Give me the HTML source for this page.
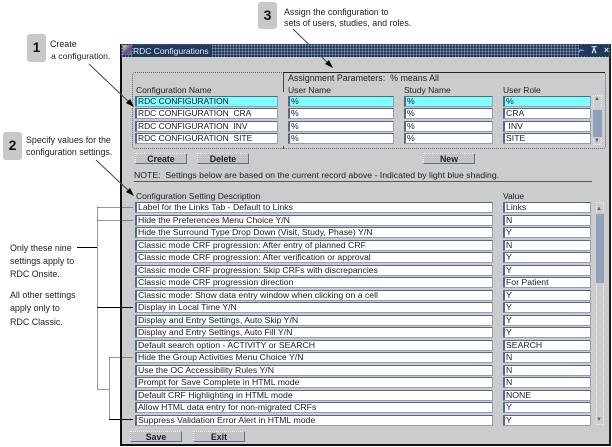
<!DOCTYPE html>
<html><head><meta charset="utf-8"><style>
html,body{margin:0;padding:0;background:#fff}
#p{position:relative;width:612px;height:447px;overflow:hidden;background:#fff;font-family:"Liberation Sans",sans-serif;font-size:8.9px;color:#222;filter:blur(.3px)}
#p div{position:absolute;box-sizing:border-box}
.t{white-space:nowrap;line-height:12px;margin-top:1px}
.f{background:#fff;border:1px solid #8f9fbd;border-left:2px solid #56678c;border-top:1px solid #56678c;height:11px;line-height:9px;padding-left:1px;white-space:nowrap;overflow:hidden;font-size:8.7px;color:#222;border-radius:1px}
.k{font-size:8.45px}
.h{font-size:8.5px}
.c{background:#7fffff}
.b{background:#c4c4c4;border-right:1px solid #5d6f95;border-bottom:1px solid #5d6f95;border-top:1px dotted #fff;border-left:1px dotted #fff;text-align:center;font-weight:bold;font-size:8.8px;line-height:10px;height:11px;width:52px;color:#222}
.n{background:#c8c8c8;border-radius:3px;width:19px;height:28px;text-align:center;font-weight:bold;font-size:14px;line-height:27px;color:#111}
</style></head><body><div id="p">

<div class="n" style="left:27px;top:34px">1</div>
<div class="t" style="left:50px;top:37px">Create</div>
<div class="t" style="left:51px;top:49px;font-size:8.7px">a configuration.</div>
<div class="n" style="left:3px;top:132px">2</div>
<div class="t" style="left:26px;top:133px">Specify values for the</div>
<div class="t" style="left:26px;top:145px">configuration settings.</div>
<div class="n" style="left:258px;top:2px;height:27px">3</div>
<div class="t" style="left:284px;top:5px">Assign the configuration to</div>
<div class="t" style="left:284px;top:16px">sets of users, studies, and roles.</div>
<div class="t" style="left:10px;top:241px">Only these nine</div>
<div class="t" style="left:10px;top:254px">settings apply to</div>
<div class="t" style="left:10px;top:267px">RDC Onsite.</div>
<div class="t" style="left:10px;top:288px">All other settings</div>
<div class="t" style="left:10px;top:301px">apply only to</div>
<div class="t" style="left:10px;top:315px">RDC Classic.</div>

<div style="left:120px;top:44px;width:491px;height:402px;background:#cccccc;border:1px solid #111;border-left:2px solid #111;border-bottom:2px solid #111;border-right:2px solid #222"></div>
<div style="left:121px;top:44px;width:489px;height:13px;background:#1e3a5f;background-image:radial-gradient(#8d9db3 0.8px,transparent 0.9px);background-size:3px 3px"></div>
<div style="left:123px;top:45px;width:9px;height:10px;background:linear-gradient(135deg,#e8e060,#7040a0 55%,#40a060);border-radius:2px"></div>
<div class="t" style="left:133px;top:44px;background:#1e3a5f;color:#e8ecf0;padding:0 3px 0 0;line-height:12px;font-size:8.5px">RDC Configurations</div>
<div class="t" style="left:579px;top:44px;width:30px;background:#1e3a5f;color:#dde;font-size:9px;line-height:11px;letter-spacing:2px;font-weight:bold">⌐ ⊼ ×</div>

<div style="left:132px;top:72px;width:474px;height:77px;border:1px dotted #56678c;border-radius:3px"></div>
<div style="left:283px;top:72px;width:322px;height:1px;background:#223"></div>
<div style="left:283px;top:73px;width:1px;height:19px;background:#445"></div>
<div style="left:283px;top:146px;width:1px;height:3px;background:#445"></div>

<div class="t" style="left:288px;top:71px">Assignment Parameters:&nbsp; % means All</div>
<div class="t h" style="left:136px;top:83px">Configuration Name</div>
<div class="t h" style="left:288px;top:83px">User Name</div>
<div class="t h" style="left:404px;top:83px">Study Name</div>
<div class="t h" style="left:503px;top:83px">User Role</div>

<div class="f c k" style="left:135px;top:96px;width:143px">RDC CONFIGURATION</div>
<div class="f c" style="left:288px;top:96px;width:106px">%</div>
<div class="f c" style="left:404px;top:96px;width:89px">%</div>
<div class="f c" style="left:503px;top:96px;width:88px">%</div>
<div class="f k" style="left:135px;top:108px;width:143px">RDC CONFIGURATION&nbsp; CRA</div>
<div class="f" style="left:288px;top:108px;width:106px">%</div>
<div class="f" style="left:404px;top:108px;width:89px">%</div>
<div class="f" style="left:503px;top:108px;width:88px">CRA</div>
<div class="f k" style="left:135px;top:121px;width:143px">RDC CONFIGURATION&nbsp; INV</div>
<div class="f" style="left:288px;top:121px;width:106px">%</div>
<div class="f" style="left:404px;top:121px;width:89px">%</div>
<div class="f" style="left:503px;top:121px;width:88px">&nbsp;INV</div>
<div class="f k" style="left:135px;top:133px;width:143px">RDC CONFIGURATION&nbsp; SITE</div>
<div class="f" style="left:288px;top:133px;width:106px">%</div>
<div class="f" style="left:404px;top:133px;width:89px">%</div>
<div class="f" style="left:503px;top:133px;width:88px">SITE</div>

<div style="left:593px;top:95px;width:9px;height:50px;border:1px dotted #eee"></div>
<div style="left:593px;top:110px;width:9px;height:27px;background:#8fa0ba"></div>
<div class="t" style="left:594px;top:94px;font-size:6px;line-height:8px;color:#56678c">▲</div>
<div class="t" style="left:594px;top:136px;font-size:6px;line-height:8px;color:#56678c">▼</div>

<div class="b" style="left:135px;top:153px">Create</div>
<div class="b" style="left:197px;top:153px">Delete</div>
<div class="b" style="left:423px;top:153px">New</div>
<div class="t" style="left:134px;top:168px;font-size:8.7px">NOTE:&nbsp; Settings below are based on the current record above - Indicated by light blue shading.</div>
<div style="left:134px;top:181px;width:458px;height:1px;background:#556"></div>
<div class="t h" style="left:136px;top:189px">Configuration Setting Description</div>
<div class="t h" style="left:503px;top:189px">Value</div>

<div class="f" style="left:135px;top:202px;width:358px">Label for the Links Tab - Default to Links</div><div class="f" style="left:503px;top:202px;width:88px">Links</div>
<div class="f" style="left:135px;top:215px;width:358px">Hide the Preferences Menu Choice Y/N</div><div class="f" style="left:503px;top:215px;width:88px">N</div>
<div class="f" style="left:135px;top:227px;width:358px">Hide the Surround Type Drop Down (Visit, Study, Phase) Y/N</div><div class="f" style="left:503px;top:227px;width:88px">Y</div>
<div class="f" style="left:135px;top:240px;width:358px">Classic mode CRF progression: After entry of planned CRF</div><div class="f" style="left:503px;top:240px;width:88px">N</div>
<div class="f" style="left:135px;top:252px;width:358px">Classic mode CRF progression: After verification or approval</div><div class="f" style="left:503px;top:252px;width:88px">Y</div>
<div class="f" style="left:135px;top:265px;width:358px">Classic mode CRF progression: Skip CRFs with discrepancies</div><div class="f" style="left:503px;top:265px;width:88px">Y</div>
<div class="f" style="left:135px;top:277px;width:358px">Classic mode CRF progression direction</div><div class="f" style="left:503px;top:277px;width:88px">For Patient</div>
<div class="f" style="left:135px;top:290px;width:358px">Classic mode: Show data entry window when clicking on a cell</div><div class="f" style="left:503px;top:290px;width:88px">Y</div>
<div class="f" style="left:135px;top:302px;width:358px">Display in Local Time Y/N</div><div class="f" style="left:503px;top:302px;width:88px">Y</div>
<div class="f" style="left:135px;top:315px;width:358px">Display and Entry Settings, Auto Skip Y/N</div><div class="f" style="left:503px;top:315px;width:88px">Y</div>
<div class="f" style="left:135px;top:327px;width:358px">Display and Entry Settings, Auto Fill Y/N</div><div class="f" style="left:503px;top:327px;width:88px">Y</div>
<div class="f" style="left:135px;top:340px;width:358px">Default search option - ACTIVITY or SEARCH</div><div class="f" style="left:503px;top:340px;width:88px">SEARCH</div>
<div class="f" style="left:135px;top:352px;width:358px">Hide the Group Activities Menu Choice Y/N</div><div class="f" style="left:503px;top:352px;width:88px">N</div>
<div class="f" style="left:135px;top:365px;width:358px">Use the OC Accessibility Rules Y/N</div><div class="f" style="left:503px;top:365px;width:88px">N</div>
<div class="f" style="left:135px;top:377px;width:358px">Prompt for Save Complete in HTML mode</div><div class="f" style="left:503px;top:377px;width:88px">N</div>
<div class="f" style="left:135px;top:390px;width:358px">Default CRF Highlighting in HTML mode</div><div class="f" style="left:503px;top:390px;width:88px">NONE</div>
<div class="f" style="left:135px;top:402px;width:358px">Allow HTML data entry for non-migrated CRFs</div><div class="f" style="left:503px;top:402px;width:88px">Y</div>
<div class="f" style="left:135px;top:415px;width:358px">Suppress Validation Error Alert in HTML mode</div><div class="f" style="left:503px;top:415px;width:88px">Y</div>

<div style="left:596px;top:202px;width:8px;height:223px;border:1px dotted #eee"></div>
<div style="left:596px;top:214px;width:8px;height:69px;background:#8fa0ba"></div>
<div class="t" style="left:596px;top:204px;font-size:6px;line-height:8px;color:#56678c">▲</div>
<div class="t" style="left:596px;top:415px;font-size:6px;line-height:8px;color:#56678c">▼</div>

<div class="b" style="left:130px;top:431px">Save</div>
<div class="b" style="left:193px;top:431px">Exit</div>

<svg width="612" height="447" style="position:absolute;left:0;top:0">
<g stroke="#333" fill="none" stroke-width="1">
<path d="M97.5 207.5V389.5H109.5" stroke-dasharray="1 1"/>
<path d="M97.5 207.5H133M97.5 220.5H133" stroke-dasharray="1 1"/>
<path d="M109.5 357.5V419.5M109.5 357.5H133" stroke-dasharray="1 1"/>
</g>
<path d="M77 247.5H97M97 307.5H133M109 419.5H133" stroke="#000" fill="none"/>
<path d="M89 64L131 104M96 160L131 193M293 29L331 66" stroke="#3a4a60" fill="none"/>
<path d="M134 107L126 103L130 99ZM134 196L126 192L130 188ZM333 68L325 64L329 60Z" fill="#000"/>
</svg>
</div></body></html>
